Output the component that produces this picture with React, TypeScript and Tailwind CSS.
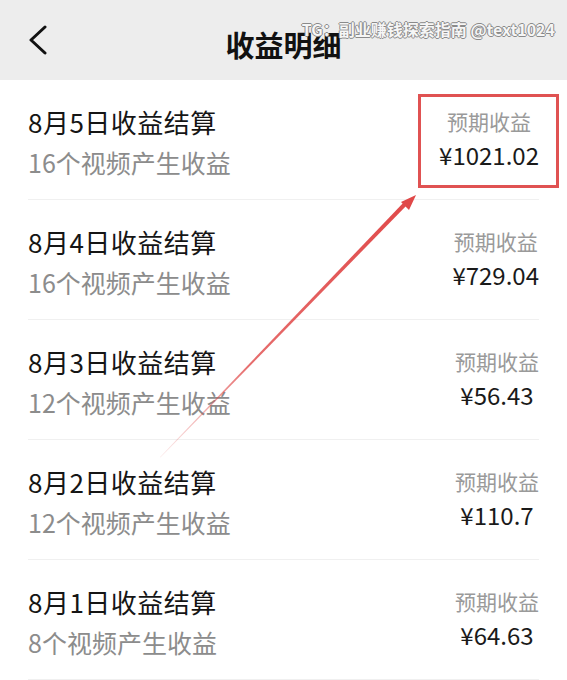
import React from 'react';

const rows = [
  { date: '8月5日收益结算', count: '16个视频产生收益', amount: '¥1021.02' },
  { date: '8月4日收益结算', count: '16个视频产生收益', amount: '¥729.04' },
  { date: '8月3日收益结算', count: '12个视频产生收益', amount: '¥56.43' },
  { date: '8月2日收益结算', count: '12个视频产生收益', amount: '¥110.7' },
  { date: '8月1日收益结算', count: '8个视频产生收益', amount: '¥64.63' },
];

const font = { fontFamily: '"Noto Sans CJK SC", "Noto Sans", sans-serif' };

const App = () => {
  return (
    <div className="relative w-[567px] h-[680px] overflow-hidden bg-white" style={font}>
      <header className="relative flex items-center h-[80px] bg-[#ededed] px-7">
        <svg width="20" height="30" viewBox="0 0 20 30" className="shrink-0">
          <path d="M17 2 L3 15 L17 28" fill="none" stroke="#111" strokeWidth="3" strokeLinecap="round" strokeLinejoin="round" />
        </svg>
        <h1 className="absolute inset-x-0 top-[24px] text-center text-[29px] leading-[40px] font-bold text-[#111]">收益明细</h1>
        <span className="absolute right-[12px] top-[17px] text-[16px] leading-[24px] font-bold text-[#f6f6f6] [text-shadow:1px_0_0_#8a8a8a,-1px_0_0_#8a8a8a,0_1px_0_#8a8a8a,0_-1px_0_#8a8a8a]">
          TG：副业赚钱探索指南 @text1024
        </span>
      </header>

      <main className="flex flex-col px-7">
        {rows.map((row, key: React.Key) => {
          return (
            <div className="flex h-[120px] items-start justify-between border-b border-[#f0f0f0]" key={key}>
              <div className="flex flex-col pt-[24px]">
                <div className="text-[26px] leading-[36px] text-[#151515] tracking-[0.5px]">{row.date}</div>
                <div className="text-[25px] leading-[36px] mt-[4px] text-[#8c8c8c]">{row.count}</div>
              </div>
              <div className="flex flex-col items-center pt-[26px]">
                <div className="text-[21px] leading-[30px] text-[#9a9a9a]">预期收益</div>
                <div className="text-[24px] leading-[34px] mt-[2px] text-[#1a1a1a]">{row.amount}</div>
              </div>
            </div>
          );
        })}
      </main>

      <div className="absolute left-[418px] top-[94px] w-[141px] h-[94px] border-[3px] border-[#e05252]" />

      <svg className="absolute inset-0 pointer-events-none" width="567" height="680">
        <defs>
          <linearGradient id="fade" x1="160" y1="457" x2="416" y2="195" gradientUnits="userSpaceOnUse">
            <stop offset="0" stopColor="#e04848" stopOpacity="0.1" />
            <stop offset="0.35" stopColor="#e04848" stopOpacity="0.8" />
            <stop offset="1" stopColor="#e04848" stopOpacity="1" />
          </linearGradient>
        </defs>
        <polygon points="160,457 160.5,457.5 408,204 405,201" fill="url(#fade)" />
        <polygon points="416,195 401,202 409,210" fill="#e04848" />
      </svg>
    </div>
  );
};

export default App;
